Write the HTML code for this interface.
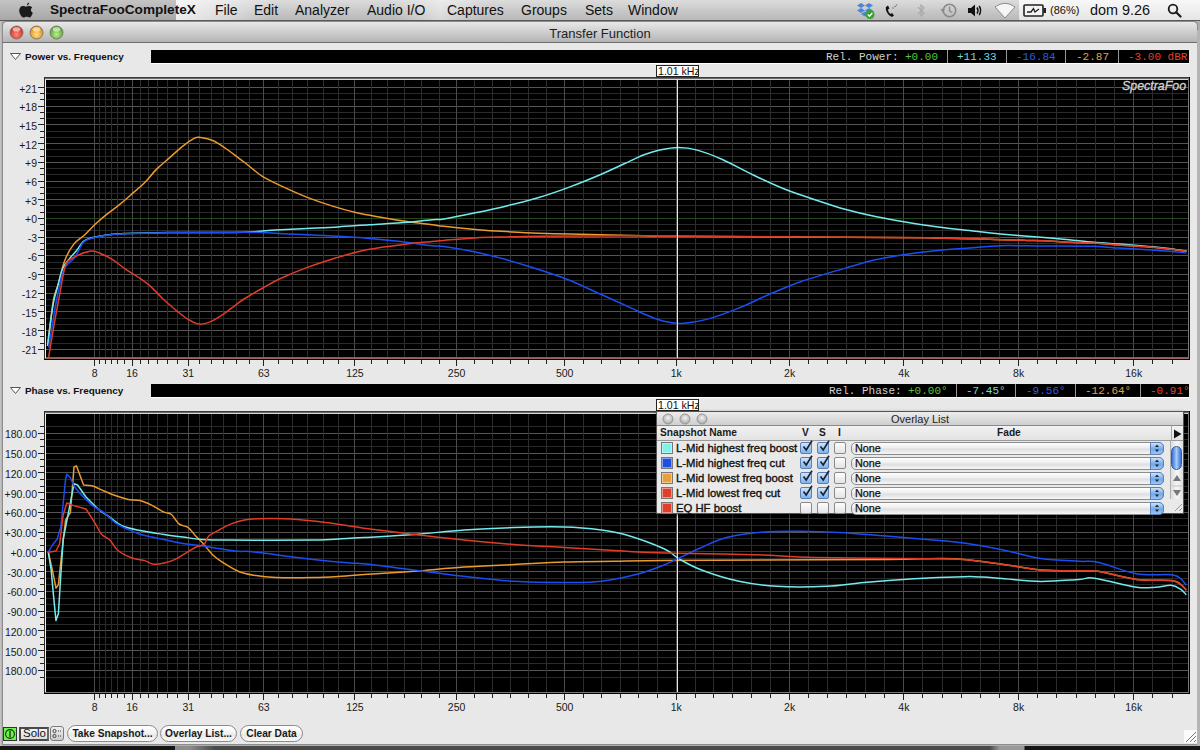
<!DOCTYPE html><html><head><meta charset="utf-8"><style>
*{margin:0;padding:0;box-sizing:border-box}
html,body{width:1200px;height:750px;overflow:hidden;background:#8e8e8e;font-family:"Liberation Sans",sans-serif}
.a{position:absolute}
.t{position:absolute;white-space:nowrap;line-height:1}
.yl{position:absolute;white-space:nowrap;line-height:1;font-size:10.5px;color:#1a1a1a;text-align:right;width:40px}
.xl{position:absolute;white-space:nowrap;line-height:1;font-size:10.5px;color:#1a1a1a;text-align:center;width:40px}
.mono{font-family:"Liberation Mono",monospace}
</style></head><body>
<div class="a" style="left:0;top:0;width:1200px;height:750px;background:#b0b0b0"></div>
<div class="a" style="left:0;top:21px;width:3px;height:725px;background:linear-gradient(90deg,#c8c8c8,#a4a4a4)"></div>
<div class="a" style="left:0;top:746px;width:1200px;height:4px;background:linear-gradient(90deg,#151515 0,#151515 175px,#8c8c8c 175px,#8c8c8c 190px,#4a4a4a 215px,#4c4c4c 990px,#9a9a9a 1000px,#9a9a9a 1024px,#151515 1025px,#151515 1200px)"></div>
<div class="a" style="left:0;top:0;width:1200px;height:21px;background:linear-gradient(#dcdcdc,#b8b8b8);border-bottom:1px solid #6e6e6e"></div>
<div class="a" style="left:2px;top:21px;width:1196px;height:724px;background:#e8e8e8;border-radius:5px 5px 0 0;border:1px solid #8c8c8c"></div>
<div class="a" style="left:2px;top:21px;width:1196px;height:22px;background:linear-gradient(#e8e8e8,#b4b4b4);border-radius:5px 5px 0 0;border:1px solid #8c8c8c;border-bottom:1px solid #6e6e6e"></div>
<div class="t" style="left:0;width:1200px;text-align:center;top:26.6px;font-size:13px;color:#1e1e1e">Transfer Function</div>
<svg class="a" style="left:10px;top:53px" width="11" height="7"><polygon points="0.5,0.5 10.5,0.5 5.5,6.5" fill="#fff" stroke="#555" stroke-width="1"/></svg>
<div class="t" style="left:25px;top:51.7px;font-size:9.9px;font-weight:bold;color:#111">Power vs. Frequency</div>
<svg class="a" style="left:10px;top:387px" width="11" height="7"><polygon points="0.5,0.5 10.5,0.5 5.5,6.5" fill="#fff" stroke="#555" stroke-width="1"/></svg>
<div class="t" style="left:25px;top:385.7px;font-size:9.9px;font-weight:bold;color:#111">Phase vs. Frequency</div>
<div class="a" style="left:151px;top:50px;width:1038px;height:14px;background:#000;border-bottom:1px solid #fff"></div>
<div class="a" style="left:151px;top:384px;width:1038px;height:14px;background:#000;border-bottom:1px solid #fff"></div>
<svg class="a" style="left:44px;top:77px" width="1146" height="283" viewBox="44 77 1146 283">
<g shape-rendering="crispEdges">
<rect x="44" y="77" width="1146" height="283" fill="#000"/>
<rect x="46" y="349" width="1142" height="1" fill="#555555"/>
<rect x="46" y="343" width="1142" height="1" fill="#2a2a2a"/>
<rect x="46" y="336" width="1142" height="1" fill="#2a2a2a"/>
<rect x="46" y="330" width="1142" height="1" fill="#555555"/>
<rect x="46" y="324" width="1142" height="1" fill="#2a2a2a"/>
<rect x="46" y="318" width="1142" height="1" fill="#2a2a2a"/>
<rect x="46" y="311" width="1142" height="1" fill="#555555"/>
<rect x="46" y="305" width="1142" height="1" fill="#2a2a2a"/>
<rect x="46" y="299" width="1142" height="1" fill="#2a2a2a"/>
<rect x="46" y="293" width="1142" height="1" fill="#555555"/>
<rect x="46" y="286" width="1142" height="1" fill="#2a2a2a"/>
<rect x="46" y="280" width="1142" height="1" fill="#2a2a2a"/>
<rect x="46" y="274" width="1142" height="1" fill="#555555"/>
<rect x="46" y="268" width="1142" height="1" fill="#2a2a2a"/>
<rect x="46" y="262" width="1142" height="1" fill="#2a2a2a"/>
<rect x="46" y="255" width="1142" height="1" fill="#555555"/>
<rect x="46" y="249" width="1142" height="1" fill="#2a2a2a"/>
<rect x="46" y="243" width="1142" height="1" fill="#2a2a2a"/>
<rect x="46" y="237" width="1142" height="1" fill="#555555"/>
<rect x="46" y="230" width="1142" height="1" fill="#2a2a2a"/>
<rect x="46" y="224" width="1142" height="1" fill="#2a2a2a"/>
<rect x="46" y="218" width="1142" height="1" fill="#555555"/>
<rect x="46" y="212" width="1142" height="1" fill="#2a2a2a"/>
<rect x="46" y="205" width="1142" height="1" fill="#2a2a2a"/>
<rect x="46" y="199" width="1142" height="1" fill="#555555"/>
<rect x="46" y="193" width="1142" height="1" fill="#2a2a2a"/>
<rect x="46" y="187" width="1142" height="1" fill="#2a2a2a"/>
<rect x="46" y="181" width="1142" height="1" fill="#555555"/>
<rect x="46" y="174" width="1142" height="1" fill="#2a2a2a"/>
<rect x="46" y="168" width="1142" height="1" fill="#2a2a2a"/>
<rect x="46" y="162" width="1142" height="1" fill="#555555"/>
<rect x="46" y="156" width="1142" height="1" fill="#2a2a2a"/>
<rect x="46" y="149" width="1142" height="1" fill="#2a2a2a"/>
<rect x="46" y="143" width="1142" height="1" fill="#555555"/>
<rect x="46" y="137" width="1142" height="1" fill="#2a2a2a"/>
<rect x="46" y="131" width="1142" height="1" fill="#2a2a2a"/>
<rect x="46" y="124" width="1142" height="1" fill="#555555"/>
<rect x="46" y="118" width="1142" height="1" fill="#2a2a2a"/>
<rect x="46" y="112" width="1142" height="1" fill="#2a2a2a"/>
<rect x="46" y="106" width="1142" height="1" fill="#555555"/>
<rect x="46" y="99" width="1142" height="1" fill="#2a2a2a"/>
<rect x="46" y="93" width="1142" height="1" fill="#2a2a2a"/>
<rect x="46" y="87" width="1142" height="1" fill="#555555"/>
<rect x="94" y="79" width="1" height="279" fill="#4a4a4a"/>
<rect x="99" y="79" width="1" height="279" fill="#2c2c2c"/>
<rect x="105" y="79" width="1" height="279" fill="#2c2c2c"/>
<rect x="111" y="79" width="1" height="279" fill="#2c2c2c"/>
<rect x="117" y="79" width="1" height="279" fill="#2c2c2c"/>
<rect x="124" y="79" width="1" height="279" fill="#2c2c2c"/>
<rect x="132" y="79" width="1" height="279" fill="#4a4a4a"/>
<rect x="140" y="79" width="1" height="279" fill="#2c2c2c"/>
<rect x="148" y="79" width="1" height="279" fill="#2c2c2c"/>
<rect x="157" y="79" width="1" height="279" fill="#2c2c2c"/>
<rect x="167" y="79" width="1" height="279" fill="#2c2c2c"/>
<rect x="177" y="79" width="1" height="279" fill="#2c2c2c"/>
<rect x="188" y="79" width="1" height="279" fill="#4a4a4a"/>
<rect x="199" y="79" width="1" height="279" fill="#2c2c2c"/>
<rect x="211" y="79" width="1" height="279" fill="#2c2c2c"/>
<rect x="223" y="79" width="1" height="279" fill="#2c2c2c"/>
<rect x="236" y="79" width="1" height="279" fill="#2c2c2c"/>
<rect x="249" y="79" width="1" height="279" fill="#2c2c2c"/>
<rect x="263" y="79" width="1" height="279" fill="#4a4a4a"/>
<rect x="278" y="79" width="1" height="279" fill="#2c2c2c"/>
<rect x="292" y="79" width="1" height="279" fill="#2c2c2c"/>
<rect x="307" y="79" width="1" height="279" fill="#2c2c2c"/>
<rect x="323" y="79" width="1" height="279" fill="#2c2c2c"/>
<rect x="338" y="79" width="1" height="279" fill="#2c2c2c"/>
<rect x="354" y="79" width="1" height="279" fill="#4a4a4a"/>
<rect x="371" y="79" width="1" height="279" fill="#2c2c2c"/>
<rect x="387" y="79" width="1" height="279" fill="#2c2c2c"/>
<rect x="404" y="79" width="1" height="279" fill="#2c2c2c"/>
<rect x="421" y="79" width="1" height="279" fill="#2c2c2c"/>
<rect x="439" y="79" width="1" height="279" fill="#2c2c2c"/>
<rect x="456" y="79" width="1" height="279" fill="#4a4a4a"/>
<rect x="474" y="79" width="1" height="279" fill="#2c2c2c"/>
<rect x="492" y="79" width="1" height="279" fill="#2c2c2c"/>
<rect x="510" y="79" width="1" height="279" fill="#2c2c2c"/>
<rect x="528" y="79" width="1" height="279" fill="#2c2c2c"/>
<rect x="546" y="79" width="1" height="279" fill="#2c2c2c"/>
<rect x="564" y="79" width="1" height="279" fill="#4a4a4a"/>
<rect x="583" y="79" width="1" height="279" fill="#2c2c2c"/>
<rect x="601" y="79" width="1" height="279" fill="#2c2c2c"/>
<rect x="620" y="79" width="1" height="279" fill="#2c2c2c"/>
<rect x="638" y="79" width="1" height="279" fill="#2c2c2c"/>
<rect x="657" y="79" width="1" height="279" fill="#2c2c2c"/>
<rect x="676" y="79" width="1" height="279" fill="#4a4a4a"/>
<rect x="695" y="79" width="1" height="279" fill="#2c2c2c"/>
<rect x="713" y="79" width="1" height="279" fill="#2c2c2c"/>
<rect x="732" y="79" width="1" height="279" fill="#2c2c2c"/>
<rect x="751" y="79" width="1" height="279" fill="#2c2c2c"/>
<rect x="770" y="79" width="1" height="279" fill="#2c2c2c"/>
<rect x="789" y="79" width="1" height="279" fill="#4a4a4a"/>
<rect x="808" y="79" width="1" height="279" fill="#2c2c2c"/>
<rect x="827" y="79" width="1" height="279" fill="#2c2c2c"/>
<rect x="846" y="79" width="1" height="279" fill="#2c2c2c"/>
<rect x="865" y="79" width="1" height="279" fill="#2c2c2c"/>
<rect x="884" y="79" width="1" height="279" fill="#2c2c2c"/>
<rect x="903" y="79" width="1" height="279" fill="#4a4a4a"/>
<rect x="922" y="79" width="1" height="279" fill="#2c2c2c"/>
<rect x="942" y="79" width="1" height="279" fill="#2c2c2c"/>
<rect x="961" y="79" width="1" height="279" fill="#2c2c2c"/>
<rect x="980" y="79" width="1" height="279" fill="#2c2c2c"/>
<rect x="999" y="79" width="1" height="279" fill="#2c2c2c"/>
<rect x="1018" y="79" width="1" height="279" fill="#4a4a4a"/>
<rect x="1037" y="79" width="1" height="279" fill="#2c2c2c"/>
<rect x="1056" y="79" width="1" height="279" fill="#2c2c2c"/>
<rect x="1076" y="79" width="1" height="279" fill="#2c2c2c"/>
<rect x="1095" y="79" width="1" height="279" fill="#2c2c2c"/>
<rect x="1114" y="79" width="1" height="279" fill="#2c2c2c"/>
<rect x="1133" y="79" width="1" height="279" fill="#4a4a4a"/>
<rect x="1152" y="79" width="1" height="279" fill="#2c2c2c"/>
<rect x="1172" y="79" width="1" height="279" fill="#2c2c2c"/>
<rect x="46" y="218" width="1142" height="1" fill="#25481a"/>
<rect x="44" y="77" width="1146" height="1" fill="#3a3a3a"/>
<rect x="44" y="78" width="1146" height="1" fill="#6a6a6a"/>
<rect x="44" y="77" width="1" height="283" fill="#2a2a2a"/>
<rect x="45" y="79" width="1" height="280" fill="#f0f0f0"/>
<rect x="45" y="79" width="1143" height="1" fill="#d8d8d8"/>
<rect x="45" y="358" width="1144" height="1" fill="#787878"/>
<rect x="1188" y="78" width="1" height="281" fill="#787878"/>
<rect x="44" y="359" width="1146" height="1" fill="#000"/>
<rect x="1189" y="77" width="1" height="283" fill="#000"/>
</g>
<path d="M47.8,344.4 C48.7,337.1 51.7,310.4 53.4,300.5 C55.1,290.6 56.3,291.4 58.1,284.9 C59.9,278.4 61.8,268.2 64.4,261.4 C67.0,254.6 70.4,248.5 73.8,244.1 C77.2,239.7 81.1,238.1 84.8,234.7 C88.5,231.3 92.0,227.1 95.7,223.7 C99.4,220.3 102.8,217.4 106.7,214.3 C110.6,211.2 115.0,208.3 119.2,204.9 C123.4,201.5 127.6,197.7 131.8,194.0 C136.0,190.3 140.1,187.2 144.3,183.0 C148.5,178.8 152.7,173.1 156.9,168.9 C161.1,164.7 165.2,161.6 169.4,157.9 C173.6,154.2 177.7,150.2 181.9,146.9 C186.1,143.6 191.4,139.8 194.5,138.2 C197.6,136.6 197.6,137.1 200.7,137.5 C203.8,137.9 209.1,138.9 213.3,140.7 C217.5,142.5 221.6,145.6 225.8,148.5 C230.0,151.4 235.4,155.7 238.4,157.9 C241.4,160.2 239.9,158.9 244.0,162.0 C248.1,165.1 256.5,172.7 262.8,176.7 C269.1,180.7 274.3,182.7 281.6,186.1 C288.9,189.5 298.3,193.8 306.7,197.1 C315.1,200.4 323.4,203.3 331.8,205.9 C340.2,208.5 348.5,210.9 356.9,212.8 C365.2,214.7 373.5,216.0 381.9,217.5 C390.2,219.0 398.6,220.4 407.0,221.6 C415.4,222.8 425.9,223.9 432.1,224.7 C438.3,225.5 436.8,225.5 444.0,226.3 C451.2,227.1 464.9,228.5 475.3,229.4 C485.8,230.3 496.2,231.0 506.7,231.6 C517.1,232.2 527.5,232.8 538.0,233.2 C548.5,233.6 558.9,233.8 569.4,234.1 C579.9,234.3 588.3,234.4 600.7,234.7 C613.1,235.0 631.5,235.4 644.0,235.7 C656.5,236.0 642.7,236.1 676.0,236.3 C709.3,236.6 800.9,236.9 844.0,237.2 C887.1,237.5 909.8,237.5 934.9,237.9 C960.0,238.3 979.4,239.0 994.5,239.4 C1009.6,239.8 1017.5,240.2 1025.8,240.4 C1034.0,240.6 1036.8,240.5 1044.0,240.8 C1051.2,241.1 1060.7,241.9 1069.0,242.3 C1077.3,242.7 1085.7,242.7 1094.0,243.1 C1102.3,243.5 1110.7,244.4 1119.0,245.0 C1127.3,245.6 1135.7,245.8 1144.0,246.5 C1152.3,247.2 1161.9,248.2 1169.0,249.0 C1176.1,249.8 1183.6,250.9 1186.5,251.3" fill="none" stroke="#ec9a30" stroke-width="1.5" stroke-linejoin="round"/>
<path d="M47.5,346.0 C48.4,339.2 51.2,315.2 53.0,305.0 C54.8,294.8 56.3,291.2 58.0,285.0 C59.7,278.8 61.0,272.5 63.0,268.0 C65.0,263.5 67.7,261.0 70.0,258.0 C72.3,255.0 74.8,252.7 77.0,250.0 C79.2,247.3 80.9,243.6 83.2,241.6 C85.5,239.6 87.1,239.1 91.0,238.0 C94.9,236.9 101.0,235.8 106.7,235.0 C112.5,234.2 115.0,233.9 125.5,233.5 C135.9,233.1 149.7,232.7 169.4,232.5 C189.2,232.3 226.3,232.6 244.0,232.2 C261.6,231.8 264.9,230.6 275.3,230.0 C285.8,229.4 296.2,228.9 306.7,228.4 C317.1,227.9 327.6,227.5 338.0,226.9 C348.4,226.3 358.9,225.4 369.4,224.7 C379.8,224.0 390.2,223.6 400.7,222.8 C411.1,222.0 424.9,220.3 432.1,219.7 C439.3,219.1 436.8,220.2 444.0,219.0 C451.2,217.8 464.9,215.0 475.3,212.8 C485.8,210.6 496.2,208.4 506.7,205.9 C517.1,203.4 527.5,200.8 538.0,197.7 C548.5,194.6 558.9,191.0 569.4,187.1 C579.9,183.2 590.2,179.0 600.7,174.5 C611.2,170.0 624.9,163.4 632.1,160.1 C639.3,156.8 639.4,156.5 644.0,154.8 C648.6,153.1 654.0,151.3 659.7,150.1 C665.5,148.9 672.2,147.6 678.5,147.6 C684.8,147.6 690.0,148.1 697.3,150.1 C704.6,152.1 713.0,155.3 722.4,159.5 C731.8,163.7 743.2,170.2 753.7,175.2 C764.2,180.2 774.7,185.1 785.1,189.3 C795.5,193.5 806.6,196.9 816.4,200.2 C826.2,203.5 834.2,206.3 844.0,209.0 C853.8,211.7 864.8,214.3 875.3,216.5 C885.8,218.7 896.2,220.5 906.7,222.2 C917.2,223.9 927.5,225.5 938.0,226.9 C948.5,228.3 958.9,229.4 969.4,230.6 C979.9,231.8 988.3,232.9 1000.7,234.1 C1013.1,235.2 1032.6,236.6 1044.0,237.5 C1055.4,238.4 1060.7,239.0 1069.0,239.8 C1077.3,240.6 1085.7,241.6 1094.0,242.3 C1102.3,243.0 1112.3,243.5 1119.0,244.0 C1125.7,244.5 1127.2,244.7 1134.0,245.3 C1140.8,245.9 1151.2,246.6 1160.0,247.5 C1168.8,248.4 1182.1,250.4 1186.5,251.0" fill="none" stroke="#74ecee" stroke-width="1.5" stroke-linejoin="round"/>
<path d="M48.7,347.6 C50.0,339.8 54.1,313.1 56.5,300.5 C58.9,287.9 61.0,278.3 62.8,272.3 C64.6,266.3 65.4,267.1 67.5,264.5 C69.6,261.9 72.7,260.3 75.3,256.7 C77.9,253.0 80.6,245.6 83.2,242.6 C85.8,239.6 87.1,239.7 91.0,238.5 C94.9,237.3 101.0,236.1 106.7,235.3 C112.5,234.5 115.0,234.2 125.5,233.8 C135.9,233.4 149.7,233.1 169.4,232.8 C189.2,232.5 226.3,232.1 244.0,232.2 C261.6,232.3 264.9,232.8 275.3,233.2 C285.8,233.6 296.2,234.2 306.7,234.7 C317.1,235.2 327.6,235.7 338.0,236.3 C348.4,236.9 358.9,237.6 369.4,238.5 C379.8,239.4 390.2,240.4 400.7,241.6 C411.1,242.8 424.9,244.9 432.1,245.7 C439.3,246.5 436.8,245.5 444.0,246.6 C451.2,247.7 464.9,249.8 475.3,252.0 C485.8,254.2 496.2,256.9 506.7,259.8 C517.1,262.7 527.5,265.8 538.0,269.2 C548.5,272.6 558.9,276.0 569.4,280.2 C579.9,284.4 590.2,289.6 600.7,294.3 C611.2,299.0 624.9,305.1 632.1,308.4 C639.3,311.7 638.9,311.9 644.0,314.0 C649.1,316.1 656.5,319.3 662.8,320.9 C669.1,322.5 674.3,323.6 681.6,323.4 C688.9,323.1 697.3,321.9 706.7,319.4 C716.1,316.9 727.5,312.6 738.0,308.4 C748.5,304.2 758.9,298.8 769.4,294.3 C779.9,289.9 788.3,286.0 800.7,281.7 C813.1,277.4 831.6,272.2 844.0,268.6 C856.4,265.0 864.8,262.2 875.3,259.8 C885.8,257.4 896.2,255.8 906.7,254.2 C917.2,252.6 927.5,251.4 938.0,250.4 C948.5,249.4 958.9,248.7 969.4,247.9 C979.9,247.1 988.3,246.0 1000.7,245.7 C1013.1,245.4 1028.5,245.9 1044.0,246.0 C1059.5,246.1 1081.5,246.0 1094.0,246.3 C1106.5,246.7 1110.7,247.6 1119.0,248.1 C1127.3,248.6 1135.7,248.9 1144.0,249.4 C1152.3,249.9 1161.9,250.7 1169.0,251.3 C1176.1,251.9 1183.6,252.7 1186.5,253.0" fill="none" stroke="#1a4ef0" stroke-width="1.5" stroke-linejoin="round"/>
<path d="M48.7,357.0 C49.5,352.3 51.6,339.2 53.4,328.8 C55.2,318.4 57.6,305.0 59.7,294.3 C61.8,283.6 63.3,270.8 65.9,264.5 C68.5,258.2 71.1,258.9 75.3,256.7 C79.5,254.4 86.8,251.5 91.0,251.0 C95.2,250.5 96.7,252.0 100.4,253.5 C104.1,255.0 108.8,257.2 113.0,259.8 C117.2,262.4 121.3,266.3 125.5,269.2 C129.7,272.1 133.8,274.1 138.0,277.0 C142.2,279.9 146.4,282.7 150.6,286.4 C154.8,290.1 158.9,295.1 163.1,299.0 C167.3,302.9 171.5,306.6 175.7,310.0 C179.9,313.4 184.3,317.0 188.2,319.4 C192.1,321.8 195.5,323.7 199.2,324.1 C202.8,324.5 206.2,323.5 210.1,321.9 C214.0,320.3 218.5,317.5 222.7,314.7 C226.9,311.9 231.6,307.9 235.2,305.3 C238.8,302.7 239.4,301.9 244.0,299.0 C248.6,296.1 256.5,291.5 262.8,288.0 C269.1,284.5 274.3,281.4 281.6,278.0 C288.9,274.6 298.3,270.7 306.7,267.6 C315.1,264.5 323.4,261.8 331.8,259.2 C340.2,256.6 348.5,254.0 356.9,252.0 C365.2,250.0 373.5,248.6 381.9,247.3 C390.2,246.0 398.6,245.1 407.0,244.1 C415.4,243.1 425.9,242.2 432.1,241.6 C438.3,241.0 436.8,241.0 444.0,240.4 C451.2,239.8 464.9,238.5 475.3,237.9 C485.8,237.3 496.2,237.2 506.7,236.9 C517.1,236.6 515.1,236.5 538.0,236.3 C560.9,236.1 621.0,235.7 644.0,235.7 C667.0,235.7 642.7,236.1 676.0,236.3 C709.3,236.6 800.9,236.9 844.0,237.2 C887.1,237.5 909.8,237.5 934.9,237.9 C960.0,238.3 979.4,239.0 994.5,239.4 C1009.6,239.8 1017.5,240.2 1025.8,240.4 C1034.0,240.6 1036.8,240.5 1044.0,240.8 C1051.2,241.1 1060.7,241.9 1069.0,242.3 C1077.3,242.7 1085.7,242.7 1094.0,243.1 C1102.3,243.5 1110.7,244.4 1119.0,245.0 C1127.3,245.6 1135.7,245.8 1144.0,246.5 C1152.3,247.2 1161.9,248.2 1169.0,249.0 C1176.1,249.8 1183.6,250.9 1186.5,251.3" fill="none" stroke="#e03c28" stroke-width="1.5" stroke-linejoin="round"/>
<rect x="46" y="357" width="1142" height="1.3" fill="#dc3c28"/>
<rect x="677" y="79" width="1" height="279" fill="#e6e6e6" shape-rendering="crispEdges"/>
</svg>
<svg class="a" style="left:44px;top:411px" width="1146" height="283" viewBox="44 411 1146 283">
<g shape-rendering="crispEdges">
<rect x="44" y="411" width="1146" height="283" fill="#000"/>
<rect x="46" y="677" width="1142" height="1" fill="#2a2a2a"/>
<rect x="46" y="670" width="1142" height="1" fill="#555555"/>
<rect x="46" y="663" width="1142" height="1" fill="#2a2a2a"/>
<rect x="46" y="657" width="1142" height="1" fill="#2a2a2a"/>
<rect x="46" y="650" width="1142" height="1" fill="#555555"/>
<rect x="46" y="644" width="1142" height="1" fill="#2a2a2a"/>
<rect x="46" y="637" width="1142" height="1" fill="#2a2a2a"/>
<rect x="46" y="630" width="1142" height="1" fill="#555555"/>
<rect x="46" y="624" width="1142" height="1" fill="#2a2a2a"/>
<rect x="46" y="617" width="1142" height="1" fill="#2a2a2a"/>
<rect x="46" y="611" width="1142" height="1" fill="#555555"/>
<rect x="46" y="604" width="1142" height="1" fill="#2a2a2a"/>
<rect x="46" y="598" width="1142" height="1" fill="#2a2a2a"/>
<rect x="46" y="591" width="1142" height="1" fill="#555555"/>
<rect x="46" y="584" width="1142" height="1" fill="#2a2a2a"/>
<rect x="46" y="578" width="1142" height="1" fill="#2a2a2a"/>
<rect x="46" y="571" width="1142" height="1" fill="#555555"/>
<rect x="46" y="565" width="1142" height="1" fill="#2a2a2a"/>
<rect x="46" y="558" width="1142" height="1" fill="#2a2a2a"/>
<rect x="46" y="551" width="1142" height="1" fill="#555555"/>
<rect x="46" y="545" width="1142" height="1" fill="#2a2a2a"/>
<rect x="46" y="538" width="1142" height="1" fill="#2a2a2a"/>
<rect x="46" y="532" width="1142" height="1" fill="#555555"/>
<rect x="46" y="525" width="1142" height="1" fill="#2a2a2a"/>
<rect x="46" y="518" width="1142" height="1" fill="#2a2a2a"/>
<rect x="46" y="512" width="1142" height="1" fill="#555555"/>
<rect x="46" y="505" width="1142" height="1" fill="#2a2a2a"/>
<rect x="46" y="499" width="1142" height="1" fill="#2a2a2a"/>
<rect x="46" y="492" width="1142" height="1" fill="#555555"/>
<rect x="46" y="486" width="1142" height="1" fill="#2a2a2a"/>
<rect x="46" y="479" width="1142" height="1" fill="#2a2a2a"/>
<rect x="46" y="472" width="1142" height="1" fill="#555555"/>
<rect x="46" y="466" width="1142" height="1" fill="#2a2a2a"/>
<rect x="46" y="459" width="1142" height="1" fill="#2a2a2a"/>
<rect x="46" y="453" width="1142" height="1" fill="#555555"/>
<rect x="46" y="446" width="1142" height="1" fill="#2a2a2a"/>
<rect x="46" y="439" width="1142" height="1" fill="#2a2a2a"/>
<rect x="46" y="433" width="1142" height="1" fill="#555555"/>
<rect x="46" y="426" width="1142" height="1" fill="#2a2a2a"/>
<rect x="94" y="413" width="1" height="279" fill="#4a4a4a"/>
<rect x="99" y="413" width="1" height="279" fill="#2c2c2c"/>
<rect x="105" y="413" width="1" height="279" fill="#2c2c2c"/>
<rect x="111" y="413" width="1" height="279" fill="#2c2c2c"/>
<rect x="117" y="413" width="1" height="279" fill="#2c2c2c"/>
<rect x="124" y="413" width="1" height="279" fill="#2c2c2c"/>
<rect x="132" y="413" width="1" height="279" fill="#4a4a4a"/>
<rect x="140" y="413" width="1" height="279" fill="#2c2c2c"/>
<rect x="148" y="413" width="1" height="279" fill="#2c2c2c"/>
<rect x="157" y="413" width="1" height="279" fill="#2c2c2c"/>
<rect x="167" y="413" width="1" height="279" fill="#2c2c2c"/>
<rect x="177" y="413" width="1" height="279" fill="#2c2c2c"/>
<rect x="188" y="413" width="1" height="279" fill="#4a4a4a"/>
<rect x="199" y="413" width="1" height="279" fill="#2c2c2c"/>
<rect x="211" y="413" width="1" height="279" fill="#2c2c2c"/>
<rect x="223" y="413" width="1" height="279" fill="#2c2c2c"/>
<rect x="236" y="413" width="1" height="279" fill="#2c2c2c"/>
<rect x="249" y="413" width="1" height="279" fill="#2c2c2c"/>
<rect x="263" y="413" width="1" height="279" fill="#4a4a4a"/>
<rect x="278" y="413" width="1" height="279" fill="#2c2c2c"/>
<rect x="292" y="413" width="1" height="279" fill="#2c2c2c"/>
<rect x="307" y="413" width="1" height="279" fill="#2c2c2c"/>
<rect x="323" y="413" width="1" height="279" fill="#2c2c2c"/>
<rect x="338" y="413" width="1" height="279" fill="#2c2c2c"/>
<rect x="354" y="413" width="1" height="279" fill="#4a4a4a"/>
<rect x="371" y="413" width="1" height="279" fill="#2c2c2c"/>
<rect x="387" y="413" width="1" height="279" fill="#2c2c2c"/>
<rect x="404" y="413" width="1" height="279" fill="#2c2c2c"/>
<rect x="421" y="413" width="1" height="279" fill="#2c2c2c"/>
<rect x="439" y="413" width="1" height="279" fill="#2c2c2c"/>
<rect x="456" y="413" width="1" height="279" fill="#4a4a4a"/>
<rect x="474" y="413" width="1" height="279" fill="#2c2c2c"/>
<rect x="492" y="413" width="1" height="279" fill="#2c2c2c"/>
<rect x="510" y="413" width="1" height="279" fill="#2c2c2c"/>
<rect x="528" y="413" width="1" height="279" fill="#2c2c2c"/>
<rect x="546" y="413" width="1" height="279" fill="#2c2c2c"/>
<rect x="564" y="413" width="1" height="279" fill="#4a4a4a"/>
<rect x="583" y="413" width="1" height="279" fill="#2c2c2c"/>
<rect x="601" y="413" width="1" height="279" fill="#2c2c2c"/>
<rect x="620" y="413" width="1" height="279" fill="#2c2c2c"/>
<rect x="638" y="413" width="1" height="279" fill="#2c2c2c"/>
<rect x="657" y="413" width="1" height="279" fill="#2c2c2c"/>
<rect x="676" y="413" width="1" height="279" fill="#4a4a4a"/>
<rect x="695" y="413" width="1" height="279" fill="#2c2c2c"/>
<rect x="713" y="413" width="1" height="279" fill="#2c2c2c"/>
<rect x="732" y="413" width="1" height="279" fill="#2c2c2c"/>
<rect x="751" y="413" width="1" height="279" fill="#2c2c2c"/>
<rect x="770" y="413" width="1" height="279" fill="#2c2c2c"/>
<rect x="789" y="413" width="1" height="279" fill="#4a4a4a"/>
<rect x="808" y="413" width="1" height="279" fill="#2c2c2c"/>
<rect x="827" y="413" width="1" height="279" fill="#2c2c2c"/>
<rect x="846" y="413" width="1" height="279" fill="#2c2c2c"/>
<rect x="865" y="413" width="1" height="279" fill="#2c2c2c"/>
<rect x="884" y="413" width="1" height="279" fill="#2c2c2c"/>
<rect x="903" y="413" width="1" height="279" fill="#4a4a4a"/>
<rect x="922" y="413" width="1" height="279" fill="#2c2c2c"/>
<rect x="942" y="413" width="1" height="279" fill="#2c2c2c"/>
<rect x="961" y="413" width="1" height="279" fill="#2c2c2c"/>
<rect x="980" y="413" width="1" height="279" fill="#2c2c2c"/>
<rect x="999" y="413" width="1" height="279" fill="#2c2c2c"/>
<rect x="1018" y="413" width="1" height="279" fill="#4a4a4a"/>
<rect x="1037" y="413" width="1" height="279" fill="#2c2c2c"/>
<rect x="1056" y="413" width="1" height="279" fill="#2c2c2c"/>
<rect x="1076" y="413" width="1" height="279" fill="#2c2c2c"/>
<rect x="1095" y="413" width="1" height="279" fill="#2c2c2c"/>
<rect x="1114" y="413" width="1" height="279" fill="#2c2c2c"/>
<rect x="1133" y="413" width="1" height="279" fill="#4a4a4a"/>
<rect x="1152" y="413" width="1" height="279" fill="#2c2c2c"/>
<rect x="1172" y="413" width="1" height="279" fill="#2c2c2c"/>
<rect x="46" y="551" width="1142" height="1" fill="#25481a"/>
<rect x="44" y="411" width="1146" height="1" fill="#3a3a3a"/>
<rect x="44" y="412" width="1146" height="1" fill="#6a6a6a"/>
<rect x="44" y="411" width="1" height="283" fill="#2a2a2a"/>
<rect x="45" y="413" width="1" height="280" fill="#f0f0f0"/>
<rect x="45" y="413" width="1143" height="1" fill="#d8d8d8"/>
<rect x="45" y="692" width="1144" height="1" fill="#787878"/>
<rect x="1188" y="412" width="1" height="281" fill="#787878"/>
<rect x="44" y="693" width="1146" height="1" fill="#000"/>
<rect x="1189" y="411" width="1" height="283" fill="#000"/>
</g>
<path d="M48.3,552.2 C48.3,552.2 52.4,570.2 52.4,570.2 C52.4,570.2 56.0,588.2 56.0,588.2 C56.0,588.2 58.4,584.6 58.4,584.6 C58.4,584.6 62.0,551.0 62.0,551.0 C62.0,551.0 65.6,519.8 65.6,519.8 C65.6,519.8 70.4,512.6 70.4,512.6 C70.4,512.6 74.0,467.0 74.0,467.0 C74.0,467.0 76.4,465.8 76.4,465.8 C76.4,465.8 83.6,485.0 83.6,485.0 C83.6,485.0 92.0,485.7 92.0,485.7 C95.4,486.7 100.0,489.3 104.0,491.0 C108.0,492.7 112.0,494.4 116.0,495.8 C120.0,497.2 124.0,498.6 128.0,499.4 C132.0,500.2 136.0,499.6 140.0,500.6 C144.0,501.6 148.0,503.5 152.0,505.4 C156.0,507.3 160.8,510.6 164.0,512.1 C167.2,513.6 169.0,512.5 171.5,514.5 C174.0,516.5 176.1,521.7 178.9,523.9 C181.7,526.1 185.5,525.6 188.3,527.6 C191.1,529.6 193.2,533.4 195.7,536.0 C198.2,538.6 200.4,540.4 203.2,543.5 C206.0,546.6 209.2,551.4 212.6,554.7 C216.0,558.0 219.5,560.3 223.8,563.1 C228.2,565.9 233.7,569.5 238.7,571.5 C243.7,573.5 247.4,574.2 253.6,575.2 C259.8,576.2 266.0,577.1 276.0,577.5 C286.0,577.9 302.5,577.7 313.4,577.5 C324.3,577.3 333.0,576.7 341.4,576.2 C349.8,575.7 351.9,575.3 364.0,574.5 C376.1,573.7 397.3,572.5 414.0,571.3 C430.7,570.0 447.3,568.1 464.0,567.0 C480.7,565.9 497.3,565.3 514.0,564.5 C530.7,563.7 547.3,562.5 564.0,562.0 C580.7,561.5 597.3,561.5 614.0,561.3 C630.7,561.0 639.0,560.7 664.0,560.5 C689.0,560.3 726.5,560.2 764.0,560.0 C801.5,559.8 859.8,559.8 889.0,559.5 C918.2,559.2 926.5,558.5 939.0,558.5 C951.5,558.5 953.5,558.4 964.0,559.4 C974.5,560.4 989.5,562.4 1002.3,564.2 C1015.1,566.0 1027.9,568.9 1040.7,570.0 C1053.5,571.1 1069.4,570.7 1079.0,570.9 C1088.6,571.1 1088.6,569.9 1098.2,571.3 C1107.8,572.7 1124.4,578.0 1136.5,579.5 C1148.6,581.0 1163.7,579.7 1171.0,580.5 C1178.3,581.3 1178.0,582.7 1180.6,584.3 C1183.1,585.9 1185.3,589.1 1186.3,590.1" fill="none" stroke="#ec9a30" stroke-width="1.5" stroke-linejoin="round"/>
<path d="M48.3,552.2 C48.3,552.2 51.2,570.2 51.2,570.2 C51.2,570.2 53.6,596.6 53.6,596.6 C53.6,596.6 56.0,620.6 56.0,620.6 C56.0,620.6 58.4,613.4 58.4,613.4 C58.4,613.4 60.8,575.0 60.8,575.0 C60.8,575.0 63.2,539.0 63.2,539.0 C63.2,539.0 68.0,515.0 68.0,515.0 C68.0,515.0 74.0,483.8 74.0,483.8 C74.0,483.8 77.6,485.0 77.6,485.0 C77.6,485.0 86.0,497.0 86.0,497.0 C86.0,497.0 98.0,509.0 98.0,509.0 C102.0,512.4 106.0,514.6 110.0,517.4 C114.0,520.2 117.0,523.6 122.0,525.8 C127.0,528.0 133.0,529.1 140.0,530.6 C147.0,532.1 156.9,533.4 164.0,534.5 C171.1,535.6 176.5,536.2 182.7,537.0 C188.9,537.8 193.8,538.9 201.3,539.4 C208.8,539.9 208.8,540.0 227.5,540.1 C246.2,540.2 294.4,540.3 313.4,540.1 C332.4,539.9 333.0,539.2 341.4,538.8 C349.8,538.4 351.9,538.2 364.0,537.5 C376.1,536.8 397.3,535.8 414.0,534.5 C430.7,533.2 447.3,531.2 464.0,530.0 C480.7,528.8 497.3,528.0 514.0,527.5 C530.7,527.0 549.4,526.6 564.0,527.0 C578.6,527.4 591.1,528.7 601.5,530.0 C611.9,531.3 616.1,531.9 626.5,535.0 C636.9,538.1 655.2,544.8 664.0,548.8 C672.8,552.8 672.8,555.3 679.0,558.8 C685.2,562.3 691.5,566.2 701.5,570.0 C711.5,573.8 726.5,578.6 739.0,581.3 C751.5,584.0 761.9,585.5 776.5,586.3 C791.1,587.1 811.9,586.9 826.5,586.3 C841.1,585.7 849.4,583.8 864.0,582.5 C878.6,581.2 897.3,579.8 914.0,578.8 C930.7,577.8 952.5,577.0 964.0,576.7 C975.5,576.4 976.8,576.8 983.2,577.1 C989.6,577.4 992.7,577.9 1002.3,578.6 C1011.9,579.3 1027.9,581.4 1040.7,581.5 C1053.5,581.6 1070.1,580.0 1079.0,579.5 C1087.9,579.0 1084.7,576.9 1094.3,578.2 C1103.9,579.5 1126.3,585.7 1136.5,587.2 C1146.7,588.7 1150.0,587.5 1155.7,587.2 C1161.5,586.9 1166.8,585.0 1171.0,585.3 C1175.2,585.6 1178.0,587.5 1180.6,589.1 C1183.1,590.7 1185.3,593.9 1186.3,594.9" fill="none" stroke="#74ecee" stroke-width="1.5" stroke-linejoin="round"/>
<path d="M48.3,552.2 C48.3,552.2 52.4,545.0 52.4,545.0 C52.4,545.0 57.2,539.0 57.2,539.0 C57.2,539.0 60.8,527.0 60.8,527.0 C60.8,527.0 63.2,503.0 63.2,503.0 C63.2,503.0 65.6,479.0 65.6,479.0 C65.6,479.0 66.8,474.2 66.8,474.2 C66.8,474.2 70.4,477.8 70.4,477.8 C70.4,477.8 74.0,486.2 74.0,486.2 C74.0,486.2 80.0,493.4 80.0,493.4 C80.0,493.4 92.0,505.4 92.0,505.4 C96.0,508.6 100.0,509.6 104.0,512.6 C108.0,515.6 112.0,520.6 116.0,523.4 C120.0,526.2 124.0,527.6 128.0,529.4 C132.0,531.2 136.0,532.9 140.0,534.2 C144.0,535.5 148.0,536.2 152.0,537.1 C156.0,538.0 158.9,538.3 164.0,539.4 C169.1,540.5 176.5,542.5 182.7,543.5 C188.9,544.5 195.1,544.8 201.3,545.7 C207.5,546.6 213.8,547.8 220.0,548.7 C226.2,549.6 233.7,550.8 238.7,551.3 C243.7,551.8 243.7,550.9 249.9,551.5 C256.1,552.1 265.4,553.4 276.0,554.7 C286.6,556.0 300.9,558.0 313.4,559.4 C325.8,560.8 342.3,562.4 350.7,563.1 C359.1,563.8 353.4,562.6 364.0,563.8 C374.6,564.9 397.3,567.9 414.0,570.0 C430.7,572.1 447.3,574.4 464.0,576.3 C480.7,578.2 497.3,580.3 514.0,581.3 C530.7,582.3 549.4,582.5 564.0,582.5 C578.6,582.5 589.0,582.8 601.5,581.3 C614.0,579.8 628.6,576.5 639.0,573.8 C649.4,571.1 657.3,567.6 664.0,565.0 C670.7,562.4 672.8,560.9 679.0,558.0 C685.2,555.1 693.6,550.9 701.5,547.5 C709.4,544.1 716.1,540.1 726.5,537.5 C736.9,534.9 751.5,533.0 764.0,532.0 C776.5,531.0 789.0,531.2 801.5,531.3 C814.0,531.4 824.4,531.7 839.0,532.5 C853.6,533.3 872.3,535.0 889.0,536.3 C905.7,537.6 926.5,539.4 939.0,540.5 C951.5,541.6 953.5,541.6 964.0,543.1 C974.5,544.6 989.5,547.2 1002.3,549.8 C1015.1,552.4 1027.9,556.6 1040.7,558.5 C1053.5,560.4 1069.4,560.7 1079.0,561.3 C1088.6,561.9 1088.6,560.2 1098.2,562.3 C1107.8,564.4 1124.4,571.7 1136.5,573.8 C1148.6,575.9 1163.7,574.0 1171.0,574.8 C1178.3,575.6 1178.0,576.9 1180.6,578.6 C1183.1,580.4 1185.3,584.2 1186.3,585.3" fill="none" stroke="#1a4ef0" stroke-width="1.5" stroke-linejoin="round"/>
<path d="M48.3,552.2 C48.3,552.2 56.0,551.0 56.0,551.0 C56.0,551.0 59.6,543.8 59.6,543.8 C59.6,543.8 63.2,515.0 63.2,515.0 C63.2,515.0 66.8,503.0 66.8,503.0 C66.8,503.0 72.8,505.4 72.8,505.4 C72.8,505.4 86.0,509.0 86.0,509.0 C86.0,509.0 94.4,522.2 94.4,522.2 C97.0,526.4 99.0,531.2 101.6,534.2 C104.2,537.2 107.2,537.4 110.0,540.2 C112.8,543.0 114.6,548.0 118.4,551.0 C122.2,554.0 128.4,556.6 132.8,558.2 C137.2,559.8 141.4,559.6 144.8,560.6 C148.2,561.6 150.0,563.8 153.2,564.2 C156.4,564.6 160.3,563.9 164.0,563.1 C167.7,562.3 171.5,561.1 175.2,559.4 C178.9,557.7 183.0,554.8 186.4,552.8 C189.8,550.8 192.8,548.6 195.7,547.2 C198.6,545.8 201.9,546.3 204.1,544.4 C206.3,542.5 206.2,538.5 208.8,536.0 C211.5,533.5 216.3,531.5 220.0,529.5 C223.7,527.5 227.1,525.5 231.2,523.9 C235.2,522.3 239.9,521.0 244.3,520.1 C248.7,519.2 250.9,519.0 257.4,518.8 C263.9,518.6 274.2,518.4 283.5,518.8 C292.8,519.2 303.8,520.1 313.4,521.1 C323.0,522.1 333.0,523.6 341.4,524.8 C349.8,526.0 351.9,526.6 364.0,528.2 C376.1,529.8 397.3,532.5 414.0,534.5 C430.7,536.5 447.3,538.3 464.0,540.0 C480.7,541.7 497.3,543.2 514.0,544.5 C530.7,545.8 547.3,546.5 564.0,547.5 C580.7,548.5 601.5,549.8 614.0,550.5 C626.5,551.2 628.6,551.5 639.0,552.0 C649.4,552.5 655.7,552.8 676.5,553.3 C697.3,553.8 741.1,554.3 764.0,555.0 C786.9,555.7 785.7,556.9 814.0,557.5 C842.3,558.1 909.0,558.5 934.0,558.8 C959.0,559.1 952.6,558.5 964.0,559.4 C975.4,560.3 989.5,562.4 1002.3,564.2 C1015.1,566.0 1027.9,568.9 1040.7,570.0 C1053.5,571.1 1069.4,570.7 1079.0,570.9 C1088.6,571.1 1088.6,569.9 1098.2,571.3 C1107.8,572.7 1124.4,578.0 1136.5,579.5 C1148.6,581.0 1163.7,579.7 1171.0,580.5 C1178.3,581.3 1178.0,582.7 1180.6,584.3 C1183.1,585.9 1185.3,589.1 1186.3,590.1" fill="none" stroke="#e03c28" stroke-width="1.5" stroke-linejoin="round"/>
<rect x="677" y="413" width="1" height="279" fill="#e6e6e6" shape-rendering="crispEdges"/>
</svg>
<div class="a" style="left:38px;top:349px;width:6px;height:1px;background:#222"></div>
<div class="yl" style="left:-3px;top:345.3px">-21</div>
<div class="a" style="left:40px;top:343px;width:4px;height:1px;background:#222"></div>
<div class="a" style="left:40px;top:336px;width:4px;height:1px;background:#222"></div>
<div class="a" style="left:38px;top:330px;width:6px;height:1px;background:#222"></div>
<div class="yl" style="left:-3px;top:326.6px">-18</div>
<div class="a" style="left:40px;top:324px;width:4px;height:1px;background:#222"></div>
<div class="a" style="left:40px;top:318px;width:4px;height:1px;background:#222"></div>
<div class="a" style="left:38px;top:311px;width:6px;height:1px;background:#222"></div>
<div class="yl" style="left:-3px;top:307.9px">-15</div>
<div class="a" style="left:40px;top:305px;width:4px;height:1px;background:#222"></div>
<div class="a" style="left:40px;top:299px;width:4px;height:1px;background:#222"></div>
<div class="a" style="left:38px;top:293px;width:6px;height:1px;background:#222"></div>
<div class="yl" style="left:-3px;top:289.2px">-12</div>
<div class="a" style="left:40px;top:286px;width:4px;height:1px;background:#222"></div>
<div class="a" style="left:40px;top:280px;width:4px;height:1px;background:#222"></div>
<div class="a" style="left:38px;top:274px;width:6px;height:1px;background:#222"></div>
<div class="yl" style="left:-3px;top:270.5px">-9</div>
<div class="a" style="left:40px;top:268px;width:4px;height:1px;background:#222"></div>
<div class="a" style="left:40px;top:262px;width:4px;height:1px;background:#222"></div>
<div class="a" style="left:38px;top:255px;width:6px;height:1px;background:#222"></div>
<div class="yl" style="left:-3px;top:251.8px">-6</div>
<div class="a" style="left:40px;top:249px;width:4px;height:1px;background:#222"></div>
<div class="a" style="left:40px;top:243px;width:4px;height:1px;background:#222"></div>
<div class="a" style="left:38px;top:237px;width:6px;height:1px;background:#222"></div>
<div class="yl" style="left:-3px;top:233.1px">-3</div>
<div class="a" style="left:40px;top:230px;width:4px;height:1px;background:#222"></div>
<div class="a" style="left:40px;top:224px;width:4px;height:1px;background:#222"></div>
<div class="a" style="left:38px;top:218px;width:6px;height:1px;background:#222"></div>
<div class="yl" style="left:-3px;top:214.4px">+0</div>
<div class="a" style="left:40px;top:212px;width:4px;height:1px;background:#222"></div>
<div class="a" style="left:40px;top:205px;width:4px;height:1px;background:#222"></div>
<div class="a" style="left:38px;top:199px;width:6px;height:1px;background:#222"></div>
<div class="yl" style="left:-3px;top:195.7px">+3</div>
<div class="a" style="left:40px;top:193px;width:4px;height:1px;background:#222"></div>
<div class="a" style="left:40px;top:187px;width:4px;height:1px;background:#222"></div>
<div class="a" style="left:38px;top:181px;width:6px;height:1px;background:#222"></div>
<div class="yl" style="left:-3px;top:177.0px">+6</div>
<div class="a" style="left:40px;top:174px;width:4px;height:1px;background:#222"></div>
<div class="a" style="left:40px;top:168px;width:4px;height:1px;background:#222"></div>
<div class="a" style="left:38px;top:162px;width:6px;height:1px;background:#222"></div>
<div class="yl" style="left:-3px;top:158.3px">+9</div>
<div class="a" style="left:40px;top:156px;width:4px;height:1px;background:#222"></div>
<div class="a" style="left:40px;top:149px;width:4px;height:1px;background:#222"></div>
<div class="a" style="left:38px;top:143px;width:6px;height:1px;background:#222"></div>
<div class="yl" style="left:-3px;top:139.6px">+12</div>
<div class="a" style="left:40px;top:137px;width:4px;height:1px;background:#222"></div>
<div class="a" style="left:40px;top:131px;width:4px;height:1px;background:#222"></div>
<div class="a" style="left:38px;top:124px;width:6px;height:1px;background:#222"></div>
<div class="yl" style="left:-3px;top:120.9px">+15</div>
<div class="a" style="left:40px;top:118px;width:4px;height:1px;background:#222"></div>
<div class="a" style="left:40px;top:112px;width:4px;height:1px;background:#222"></div>
<div class="a" style="left:38px;top:106px;width:6px;height:1px;background:#222"></div>
<div class="yl" style="left:-3px;top:102.2px">+18</div>
<div class="a" style="left:40px;top:99px;width:4px;height:1px;background:#222"></div>
<div class="a" style="left:40px;top:93px;width:4px;height:1px;background:#222"></div>
<div class="a" style="left:38px;top:87px;width:6px;height:1px;background:#222"></div>
<div class="yl" style="left:-3px;top:83.5px">+21</div>
<div class="a" style="left:40px;top:677px;width:4px;height:1px;background:#222"></div>
<div class="a" style="left:38px;top:670px;width:6px;height:1px;background:#222"></div>
<div class="yl" style="left:-3px;top:666.4px">180.00</div>
<div class="a" style="left:40px;top:663px;width:4px;height:1px;background:#222"></div>
<div class="a" style="left:40px;top:657px;width:4px;height:1px;background:#222"></div>
<div class="a" style="left:38px;top:650px;width:6px;height:1px;background:#222"></div>
<div class="yl" style="left:-3px;top:646.7px">150.00</div>
<div class="a" style="left:40px;top:644px;width:4px;height:1px;background:#222"></div>
<div class="a" style="left:40px;top:637px;width:4px;height:1px;background:#222"></div>
<div class="a" style="left:38px;top:630px;width:6px;height:1px;background:#222"></div>
<div class="yl" style="left:-3px;top:626.9px">120.00</div>
<div class="a" style="left:40px;top:624px;width:4px;height:1px;background:#222"></div>
<div class="a" style="left:40px;top:617px;width:4px;height:1px;background:#222"></div>
<div class="a" style="left:38px;top:611px;width:6px;height:1px;background:#222"></div>
<div class="yl" style="left:-3px;top:607.2px">-90.00</div>
<div class="a" style="left:40px;top:604px;width:4px;height:1px;background:#222"></div>
<div class="a" style="left:40px;top:598px;width:4px;height:1px;background:#222"></div>
<div class="a" style="left:38px;top:591px;width:6px;height:1px;background:#222"></div>
<div class="yl" style="left:-3px;top:587.4px">-60.00</div>
<div class="a" style="left:40px;top:584px;width:4px;height:1px;background:#222"></div>
<div class="a" style="left:40px;top:578px;width:4px;height:1px;background:#222"></div>
<div class="a" style="left:38px;top:571px;width:6px;height:1px;background:#222"></div>
<div class="yl" style="left:-3px;top:567.7px">-30.00</div>
<div class="a" style="left:40px;top:565px;width:4px;height:1px;background:#222"></div>
<div class="a" style="left:40px;top:558px;width:4px;height:1px;background:#222"></div>
<div class="a" style="left:38px;top:551px;width:6px;height:1px;background:#222"></div>
<div class="yl" style="left:-3px;top:547.9px">+0.00</div>
<div class="a" style="left:40px;top:545px;width:4px;height:1px;background:#222"></div>
<div class="a" style="left:40px;top:538px;width:4px;height:1px;background:#222"></div>
<div class="a" style="left:38px;top:532px;width:6px;height:1px;background:#222"></div>
<div class="yl" style="left:-3px;top:528.1px">+30.00</div>
<div class="a" style="left:40px;top:525px;width:4px;height:1px;background:#222"></div>
<div class="a" style="left:40px;top:518px;width:4px;height:1px;background:#222"></div>
<div class="a" style="left:38px;top:512px;width:6px;height:1px;background:#222"></div>
<div class="yl" style="left:-3px;top:508.4px">+60.00</div>
<div class="a" style="left:40px;top:505px;width:4px;height:1px;background:#222"></div>
<div class="a" style="left:40px;top:499px;width:4px;height:1px;background:#222"></div>
<div class="a" style="left:38px;top:492px;width:6px;height:1px;background:#222"></div>
<div class="yl" style="left:-3px;top:488.6px">+90.00</div>
<div class="a" style="left:40px;top:486px;width:4px;height:1px;background:#222"></div>
<div class="a" style="left:40px;top:479px;width:4px;height:1px;background:#222"></div>
<div class="a" style="left:38px;top:472px;width:6px;height:1px;background:#222"></div>
<div class="yl" style="left:-3px;top:468.9px">120.00</div>
<div class="a" style="left:40px;top:466px;width:4px;height:1px;background:#222"></div>
<div class="a" style="left:40px;top:459px;width:4px;height:1px;background:#222"></div>
<div class="a" style="left:38px;top:453px;width:6px;height:1px;background:#222"></div>
<div class="yl" style="left:-3px;top:449.1px">150.00</div>
<div class="a" style="left:40px;top:446px;width:4px;height:1px;background:#222"></div>
<div class="a" style="left:40px;top:439px;width:4px;height:1px;background:#222"></div>
<div class="a" style="left:38px;top:433px;width:6px;height:1px;background:#222"></div>
<div class="yl" style="left:-3px;top:429.4px">180.00</div>
<div class="a" style="left:40px;top:426px;width:4px;height:1px;background:#222"></div>
<div class="a" style="left:94px;top:360px;width:1px;height:6px;background:#222"></div>
<div class="xl" style="left:74.6px;top:367.8px">8</div>
<div class="a" style="left:99px;top:360px;width:1px;height:4px;background:#222"></div>
<div class="a" style="left:105px;top:360px;width:1px;height:4px;background:#222"></div>
<div class="a" style="left:111px;top:360px;width:1px;height:4px;background:#222"></div>
<div class="a" style="left:117px;top:360px;width:1px;height:4px;background:#222"></div>
<div class="a" style="left:124px;top:360px;width:1px;height:4px;background:#222"></div>
<div class="a" style="left:132px;top:360px;width:1px;height:6px;background:#222"></div>
<div class="xl" style="left:112.0px;top:367.8px">16</div>
<div class="a" style="left:140px;top:360px;width:1px;height:4px;background:#222"></div>
<div class="a" style="left:148px;top:360px;width:1px;height:4px;background:#222"></div>
<div class="a" style="left:157px;top:360px;width:1px;height:4px;background:#222"></div>
<div class="a" style="left:167px;top:360px;width:1px;height:4px;background:#222"></div>
<div class="a" style="left:177px;top:360px;width:1px;height:4px;background:#222"></div>
<div class="a" style="left:188px;top:360px;width:1px;height:6px;background:#222"></div>
<div class="xl" style="left:168.3px;top:367.8px">31</div>
<div class="a" style="left:199px;top:360px;width:1px;height:4px;background:#222"></div>
<div class="a" style="left:211px;top:360px;width:1px;height:4px;background:#222"></div>
<div class="a" style="left:223px;top:360px;width:1px;height:4px;background:#222"></div>
<div class="a" style="left:236px;top:360px;width:1px;height:4px;background:#222"></div>
<div class="a" style="left:249px;top:360px;width:1px;height:4px;background:#222"></div>
<div class="a" style="left:263px;top:360px;width:1px;height:6px;background:#222"></div>
<div class="xl" style="left:243.8px;top:367.8px">63</div>
<div class="a" style="left:278px;top:360px;width:1px;height:4px;background:#222"></div>
<div class="a" style="left:292px;top:360px;width:1px;height:4px;background:#222"></div>
<div class="a" style="left:307px;top:360px;width:1px;height:4px;background:#222"></div>
<div class="a" style="left:323px;top:360px;width:1px;height:4px;background:#222"></div>
<div class="a" style="left:338px;top:360px;width:1px;height:4px;background:#222"></div>
<div class="a" style="left:354px;top:360px;width:1px;height:6px;background:#222"></div>
<div class="xl" style="left:334.9px;top:367.8px">125</div>
<div class="a" style="left:371px;top:360px;width:1px;height:4px;background:#222"></div>
<div class="a" style="left:387px;top:360px;width:1px;height:4px;background:#222"></div>
<div class="a" style="left:404px;top:360px;width:1px;height:4px;background:#222"></div>
<div class="a" style="left:421px;top:360px;width:1px;height:4px;background:#222"></div>
<div class="a" style="left:439px;top:360px;width:1px;height:4px;background:#222"></div>
<div class="a" style="left:456px;top:360px;width:1px;height:6px;background:#222"></div>
<div class="xl" style="left:436.6px;top:367.8px">250</div>
<div class="a" style="left:474px;top:360px;width:1px;height:4px;background:#222"></div>
<div class="a" style="left:492px;top:360px;width:1px;height:4px;background:#222"></div>
<div class="a" style="left:510px;top:360px;width:1px;height:4px;background:#222"></div>
<div class="a" style="left:528px;top:360px;width:1px;height:4px;background:#222"></div>
<div class="a" style="left:546px;top:360px;width:1px;height:4px;background:#222"></div>
<div class="a" style="left:564px;top:360px;width:1px;height:6px;background:#222"></div>
<div class="xl" style="left:544.7px;top:367.8px">500</div>
<div class="a" style="left:583px;top:360px;width:1px;height:4px;background:#222"></div>
<div class="a" style="left:601px;top:360px;width:1px;height:4px;background:#222"></div>
<div class="a" style="left:620px;top:360px;width:1px;height:4px;background:#222"></div>
<div class="a" style="left:638px;top:360px;width:1px;height:4px;background:#222"></div>
<div class="a" style="left:657px;top:360px;width:1px;height:4px;background:#222"></div>
<div class="a" style="left:676px;top:360px;width:1px;height:6px;background:#222"></div>
<div class="xl" style="left:656.2px;top:367.8px">1k</div>
<div class="a" style="left:695px;top:360px;width:1px;height:4px;background:#222"></div>
<div class="a" style="left:713px;top:360px;width:1px;height:4px;background:#222"></div>
<div class="a" style="left:732px;top:360px;width:1px;height:4px;background:#222"></div>
<div class="a" style="left:751px;top:360px;width:1px;height:4px;background:#222"></div>
<div class="a" style="left:770px;top:360px;width:1px;height:4px;background:#222"></div>
<div class="a" style="left:789px;top:360px;width:1px;height:6px;background:#222"></div>
<div class="xl" style="left:769.6px;top:367.8px">2k</div>
<div class="a" style="left:808px;top:360px;width:1px;height:4px;background:#222"></div>
<div class="a" style="left:827px;top:360px;width:1px;height:4px;background:#222"></div>
<div class="a" style="left:846px;top:360px;width:1px;height:4px;background:#222"></div>
<div class="a" style="left:865px;top:360px;width:1px;height:4px;background:#222"></div>
<div class="a" style="left:884px;top:360px;width:1px;height:4px;background:#222"></div>
<div class="a" style="left:903px;top:360px;width:1px;height:6px;background:#222"></div>
<div class="xl" style="left:883.9px;top:367.8px">4k</div>
<div class="a" style="left:922px;top:360px;width:1px;height:4px;background:#222"></div>
<div class="a" style="left:942px;top:360px;width:1px;height:4px;background:#222"></div>
<div class="a" style="left:961px;top:360px;width:1px;height:4px;background:#222"></div>
<div class="a" style="left:980px;top:360px;width:1px;height:4px;background:#222"></div>
<div class="a" style="left:999px;top:360px;width:1px;height:4px;background:#222"></div>
<div class="a" style="left:1018px;top:360px;width:1px;height:6px;background:#222"></div>
<div class="xl" style="left:998.6px;top:367.8px">8k</div>
<div class="a" style="left:1037px;top:360px;width:1px;height:4px;background:#222"></div>
<div class="a" style="left:1056px;top:360px;width:1px;height:4px;background:#222"></div>
<div class="a" style="left:1076px;top:360px;width:1px;height:4px;background:#222"></div>
<div class="a" style="left:1095px;top:360px;width:1px;height:4px;background:#222"></div>
<div class="a" style="left:1114px;top:360px;width:1px;height:4px;background:#222"></div>
<div class="a" style="left:1133px;top:360px;width:1px;height:6px;background:#222"></div>
<div class="xl" style="left:1113.7px;top:367.8px">16k</div>
<div class="a" style="left:1152px;top:360px;width:1px;height:4px;background:#222"></div>
<div class="a" style="left:1172px;top:360px;width:1px;height:4px;background:#222"></div>
<div class="a" style="left:94px;top:694px;width:1px;height:6px;background:#222"></div>
<div class="xl" style="left:74.6px;top:701.8px">8</div>
<div class="a" style="left:99px;top:694px;width:1px;height:4px;background:#222"></div>
<div class="a" style="left:105px;top:694px;width:1px;height:4px;background:#222"></div>
<div class="a" style="left:111px;top:694px;width:1px;height:4px;background:#222"></div>
<div class="a" style="left:117px;top:694px;width:1px;height:4px;background:#222"></div>
<div class="a" style="left:124px;top:694px;width:1px;height:4px;background:#222"></div>
<div class="a" style="left:132px;top:694px;width:1px;height:6px;background:#222"></div>
<div class="xl" style="left:112.0px;top:701.8px">16</div>
<div class="a" style="left:140px;top:694px;width:1px;height:4px;background:#222"></div>
<div class="a" style="left:148px;top:694px;width:1px;height:4px;background:#222"></div>
<div class="a" style="left:157px;top:694px;width:1px;height:4px;background:#222"></div>
<div class="a" style="left:167px;top:694px;width:1px;height:4px;background:#222"></div>
<div class="a" style="left:177px;top:694px;width:1px;height:4px;background:#222"></div>
<div class="a" style="left:188px;top:694px;width:1px;height:6px;background:#222"></div>
<div class="xl" style="left:168.3px;top:701.8px">31</div>
<div class="a" style="left:199px;top:694px;width:1px;height:4px;background:#222"></div>
<div class="a" style="left:211px;top:694px;width:1px;height:4px;background:#222"></div>
<div class="a" style="left:223px;top:694px;width:1px;height:4px;background:#222"></div>
<div class="a" style="left:236px;top:694px;width:1px;height:4px;background:#222"></div>
<div class="a" style="left:249px;top:694px;width:1px;height:4px;background:#222"></div>
<div class="a" style="left:263px;top:694px;width:1px;height:6px;background:#222"></div>
<div class="xl" style="left:243.8px;top:701.8px">63</div>
<div class="a" style="left:278px;top:694px;width:1px;height:4px;background:#222"></div>
<div class="a" style="left:292px;top:694px;width:1px;height:4px;background:#222"></div>
<div class="a" style="left:307px;top:694px;width:1px;height:4px;background:#222"></div>
<div class="a" style="left:323px;top:694px;width:1px;height:4px;background:#222"></div>
<div class="a" style="left:338px;top:694px;width:1px;height:4px;background:#222"></div>
<div class="a" style="left:354px;top:694px;width:1px;height:6px;background:#222"></div>
<div class="xl" style="left:334.9px;top:701.8px">125</div>
<div class="a" style="left:371px;top:694px;width:1px;height:4px;background:#222"></div>
<div class="a" style="left:387px;top:694px;width:1px;height:4px;background:#222"></div>
<div class="a" style="left:404px;top:694px;width:1px;height:4px;background:#222"></div>
<div class="a" style="left:421px;top:694px;width:1px;height:4px;background:#222"></div>
<div class="a" style="left:439px;top:694px;width:1px;height:4px;background:#222"></div>
<div class="a" style="left:456px;top:694px;width:1px;height:6px;background:#222"></div>
<div class="xl" style="left:436.6px;top:701.8px">250</div>
<div class="a" style="left:474px;top:694px;width:1px;height:4px;background:#222"></div>
<div class="a" style="left:492px;top:694px;width:1px;height:4px;background:#222"></div>
<div class="a" style="left:510px;top:694px;width:1px;height:4px;background:#222"></div>
<div class="a" style="left:528px;top:694px;width:1px;height:4px;background:#222"></div>
<div class="a" style="left:546px;top:694px;width:1px;height:4px;background:#222"></div>
<div class="a" style="left:564px;top:694px;width:1px;height:6px;background:#222"></div>
<div class="xl" style="left:544.7px;top:701.8px">500</div>
<div class="a" style="left:583px;top:694px;width:1px;height:4px;background:#222"></div>
<div class="a" style="left:601px;top:694px;width:1px;height:4px;background:#222"></div>
<div class="a" style="left:620px;top:694px;width:1px;height:4px;background:#222"></div>
<div class="a" style="left:638px;top:694px;width:1px;height:4px;background:#222"></div>
<div class="a" style="left:657px;top:694px;width:1px;height:4px;background:#222"></div>
<div class="a" style="left:676px;top:694px;width:1px;height:6px;background:#222"></div>
<div class="xl" style="left:656.2px;top:701.8px">1k</div>
<div class="a" style="left:695px;top:694px;width:1px;height:4px;background:#222"></div>
<div class="a" style="left:713px;top:694px;width:1px;height:4px;background:#222"></div>
<div class="a" style="left:732px;top:694px;width:1px;height:4px;background:#222"></div>
<div class="a" style="left:751px;top:694px;width:1px;height:4px;background:#222"></div>
<div class="a" style="left:770px;top:694px;width:1px;height:4px;background:#222"></div>
<div class="a" style="left:789px;top:694px;width:1px;height:6px;background:#222"></div>
<div class="xl" style="left:769.6px;top:701.8px">2k</div>
<div class="a" style="left:808px;top:694px;width:1px;height:4px;background:#222"></div>
<div class="a" style="left:827px;top:694px;width:1px;height:4px;background:#222"></div>
<div class="a" style="left:846px;top:694px;width:1px;height:4px;background:#222"></div>
<div class="a" style="left:865px;top:694px;width:1px;height:4px;background:#222"></div>
<div class="a" style="left:884px;top:694px;width:1px;height:4px;background:#222"></div>
<div class="a" style="left:903px;top:694px;width:1px;height:6px;background:#222"></div>
<div class="xl" style="left:883.9px;top:701.8px">4k</div>
<div class="a" style="left:922px;top:694px;width:1px;height:4px;background:#222"></div>
<div class="a" style="left:942px;top:694px;width:1px;height:4px;background:#222"></div>
<div class="a" style="left:961px;top:694px;width:1px;height:4px;background:#222"></div>
<div class="a" style="left:980px;top:694px;width:1px;height:4px;background:#222"></div>
<div class="a" style="left:999px;top:694px;width:1px;height:4px;background:#222"></div>
<div class="a" style="left:1018px;top:694px;width:1px;height:6px;background:#222"></div>
<div class="xl" style="left:998.6px;top:701.8px">8k</div>
<div class="a" style="left:1037px;top:694px;width:1px;height:4px;background:#222"></div>
<div class="a" style="left:1056px;top:694px;width:1px;height:4px;background:#222"></div>
<div class="a" style="left:1076px;top:694px;width:1px;height:4px;background:#222"></div>
<div class="a" style="left:1095px;top:694px;width:1px;height:4px;background:#222"></div>
<div class="a" style="left:1114px;top:694px;width:1px;height:4px;background:#222"></div>
<div class="a" style="left:1133px;top:694px;width:1px;height:6px;background:#222"></div>
<div class="xl" style="left:1113.7px;top:701.8px">16k</div>
<div class="a" style="left:1152px;top:694px;width:1px;height:4px;background:#222"></div>
<div class="a" style="left:1172px;top:694px;width:1px;height:4px;background:#222"></div>
<div class="a" style="left:0;top:0;width:176px;height:21px;background:linear-gradient(#c4c4c4,#a6a6a6)"></div>
<div class="a" style="left:176px;top:0;width:100px;height:21px;background:linear-gradient(90deg,rgba(255,255,255,.75),rgba(255,255,255,.35) 60%,rgba(255,255,255,0))"></div>
<div class="a" style="left:395px;top:0;width:90px;height:21px;background:linear-gradient(90deg,rgba(255,255,255,0),rgba(255,255,255,.45),rgba(255,255,255,0))"></div>
<div class="a" style="left:1019px;top:0;width:181px;height:21px;background:linear-gradient(#f8f8f8,#e4e4e4)"></div>
<div class="a" style="left:0;top:20px;width:1200px;height:1px;background:#5a5a5a"></div>
<svg class="a" style="left:18px;top:2px" width="16" height="17" viewBox="0 0 16 17"><path d="M11.2,0.5 C11.3,1.8 10.4,3.2 9,3.5 C8.8,2.2 9.8,0.8 11.2,0.5 Z M8,4.6 C9,4.6 10,3.9 11.4,3.9 C12.3,3.9 13.6,4.4 14.3,5.6 C12.3,6.8 12.6,9.8 14.8,10.7 C14.3,12.4 13,15.4 11.5,15.5 C10.4,15.6 10,14.8 8.6,14.8 C7.2,14.8 6.8,15.5 5.6,15.6 C3.9,15.6 1.2,12.2 1.2,8.6 C1.2,5.9 2.9,4.1 4.9,4.1 C6.2,4.1 7.1,4.6 8,4.6 Z" fill="#1a1a1a"/></svg>
<div class="t" style="left:50px;top:3px;font-size:13.6px;font-weight:bold;color:#111">SpectraFooCompleteX</div>
<div class="t" style="left:215px;top:3px;font-size:14px;color:#111">File</div>
<div class="t" style="left:254px;top:3px;font-size:14px;color:#111">Edit</div>
<div class="t" style="left:295px;top:3px;font-size:14px;color:#111">Analyzer</div>
<div class="t" style="left:367px;top:3px;font-size:14px;color:#111">Audio I/O</div>
<div class="t" style="left:447px;top:3px;font-size:14px;color:#111">Captures</div>
<div class="t" style="left:521px;top:3px;font-size:14px;color:#111">Groups</div>
<div class="t" style="left:585px;top:3px;font-size:14px;color:#111">Sets</div>
<div class="t" style="left:628px;top:3px;font-size:14px;color:#111">Window</div>
<div class="t" style="left:1050px;top:5px;font-size:11px;color:#111">(86%)</div>
<div class="t" style="left:1090px;top:3px;font-size:14.4px;color:#111">dom 9.26</div>
<svg class="a" style="left:1167px;top:3px" width="15" height="15"><circle cx="6" cy="6" r="4.3" fill="none" stroke="#1a1a1a" stroke-width="1.8"/><line x1="9.2" y1="9.2" x2="13.5" y2="13.5" stroke="#1a1a1a" stroke-width="2.2" stroke-linecap="round"/></svg>
<svg class="a" style="left:857px;top:2px" width="19" height="18"><g fill="#4a86d8"><polygon points="4,1 8,3.5 4,6 0,3.5"/><polygon points="12,1 16,3.5 12,6 8,3.5"/><polygon points="4,6 8,8.5 4,11 0,8.5"/><polygon points="12,6 16,8.5 12,11 8,8.5"/><polygon points="8,9.5 12,12 8,14.5 4,12"/></g><circle cx="13" cy="12.5" r="4.5" fill="#3aa030"/><path d="M10.8,12.5 L12.5,14.2 L15.3,11" stroke="#fff" stroke-width="1.4" fill="none"/></svg>
<svg class="a" style="left:884px;top:3px" width="14" height="16"><path d="M2,4 C1,6 3,12 8,14 L10,12.5 L8,10 L6.5,11 C5,10 4,8 4,6.5 L5.5,5.5 L4,2.5 Z" fill="#111"/><g fill="#777"><circle cx="9" cy="5" r=".8"/><circle cx="11" cy="3.5" r=".8"/><circle cx="12.5" cy="2" r=".8"/></g></svg>
<svg class="a" style="left:916px;top:3px" width="10" height="15"><path d="M2,4 L8,10 L5,13 L5,2 L8,5 L2,11" fill="none" stroke="#a8a8a8" stroke-width="1.1"/></svg>
<svg class="a" style="left:940px;top:2px" width="18" height="17"><circle cx="9.5" cy="8.5" r="6.2" fill="none" stroke="#8a8a8a" stroke-width="1.6"/><path d="M9.5,4.5 L9.5,8.8 L12.3,10.5" fill="none" stroke="#8a8a8a" stroke-width="1.4"/><polygon points="0.5,7 5,7 2.8,10.5" fill="#8a8a8a"/></svg>
<svg class="a" style="left:967px;top:3px" width="16" height="15"><polygon points="1,5 4,5 8,1.5 8,13.5 4,10 1,10" fill="#111"/><path d="M10,4.5 Q12,7.5 10,10.5 M12.2,3 Q15,7.5 12.2,12" fill="none" stroke="#111" stroke-width="1.5"/></svg>
<svg class="a" style="left:994px;top:2px" width="22" height="17"><path d="M1,5 Q11,-2.5 21,5 L11,16 Z" fill="#f6f6f6" stroke="#8a8a8a" stroke-width="1"/></svg>
<svg class="a" style="left:1023px;top:4px" width="24" height="13"><rect x="1" y="1" width="19" height="11" rx="1" fill="#f4f4f4" stroke="#222" stroke-width="1.6"/><rect x="20.5" y="4" width="2.5" height="5" fill="#222"/><path d="M4,8 L8,8 L10.5,4.5 L12,8 L16,5" fill="none" stroke="#222" stroke-width="1.3"/></svg>
<svg class="a" style="left:9.0px;top:25px" width="15" height="15"><defs><radialGradient id="g16" cx="50%" cy="65%" r="60%"><stop offset="0" stop-color="#ff8a80"/><stop offset="1" stop-color="#c8281e"/></radialGradient></defs><circle cx="7.5" cy="7.5" r="6.5" fill="url(#g16)" stroke="#7a6a60" stroke-width=".8"/><ellipse cx="7.5" cy="4.3" rx="3.8" ry="2.3" fill="rgba(255,255,255,.55)"/></svg>
<svg class="a" style="left:29.0px;top:25px" width="15" height="15"><defs><radialGradient id="g36" cx="50%" cy="65%" r="60%"><stop offset="0" stop-color="#ffe08a"/><stop offset="1" stop-color="#d88a10"/></radialGradient></defs><circle cx="7.5" cy="7.5" r="6.5" fill="url(#g36)" stroke="#7a6a60" stroke-width=".8"/><ellipse cx="7.5" cy="4.3" rx="3.8" ry="2.3" fill="rgba(255,255,255,.55)"/></svg>
<svg class="a" style="left:49.0px;top:25px" width="15" height="15"><defs><radialGradient id="g56" cx="50%" cy="65%" r="60%"><stop offset="0" stop-color="#b8ee90"/><stop offset="1" stop-color="#4aa028"/></radialGradient></defs><circle cx="7.5" cy="7.5" r="6.5" fill="url(#g56)" stroke="#7a6a60" stroke-width=".8"/><ellipse cx="7.5" cy="4.3" rx="3.8" ry="2.3" fill="rgba(255,255,255,.55)"/></svg>
<div class="t mono" style="left:826px;top:52px;font-size:11px;color:#d0d0d0">Rel. Power:</div>
<div class="t mono" style="left:905px;top:52px;font-size:11px;color:#56c83a">+0.00</div>
<div class="t mono" style="left:957px;top:52px;font-size:11px;color:#72d8dc">+11.33</div>
<div class="t mono" style="left:1016px;top:52px;font-size:11px;color:#2a5ce8">-16.84</div>
<div class="t mono" style="left:1076px;top:52px;font-size:11px;color:#e8a040">-2.87</div>
<div class="t mono" style="left:1128px;top:52px;font-size:11px;color:#e0402c">-3.00 dBR</div>
<div class="a" style="left:947px;top:50px;width:1px;height:13px;background:#9a9a9a"></div>
<div class="a" style="left:1006px;top:50px;width:1px;height:13px;background:#9a9a9a"></div>
<div class="a" style="left:1065px;top:50px;width:1px;height:13px;background:#9a9a9a"></div>
<div class="a" style="left:1118px;top:50px;width:1px;height:13px;background:#9a9a9a"></div>
<div class="t mono" style="left:829px;top:386px;font-size:11px;color:#d0d0d0">Rel. Phase:</div>
<div class="t mono" style="left:908px;top:386px;font-size:11px;color:#56c83a">+0.00&deg;</div>
<div class="t mono" style="left:966px;top:386px;font-size:11px;color:#72d8dc">-7.45&deg;</div>
<div class="t mono" style="left:1026px;top:386px;font-size:11px;color:#2a5ce8">-9.56&deg;</div>
<div class="t mono" style="left:1085px;top:386px;font-size:11px;color:#e8a040">-12.64&deg;</div>
<div class="t mono" style="left:1150px;top:386px;font-size:11px;color:#e0402c">-0.91&deg;</div>
<div class="a" style="left:956px;top:384px;width:1px;height:13px;background:#9a9a9a"></div>
<div class="a" style="left:1015px;top:384px;width:1px;height:13px;background:#9a9a9a"></div>
<div class="a" style="left:1075px;top:384px;width:1px;height:13px;background:#9a9a9a"></div>
<div class="a" style="left:1140px;top:384px;width:1px;height:13px;background:#9a9a9a"></div>
<div class="t" style="left:656px;top:65px;width:43px;height:12px;background:#fff;border:1px solid #222;font-size:10.6px;line-height:11px;padding-left:1px;color:#111;overflow:hidden">1.01 kHz</div>
<div class="t" style="left:656px;top:399px;width:43px;height:12px;background:#fff;border:1px solid #222;font-size:10.6px;line-height:11px;padding-left:1px;color:#111;overflow:hidden">1.01 kHz</div>
<div class="a" style="left:656px;top:411px;width:528px;height:103px;background:#e9e9e9;border:1px solid #555;box-shadow:0 1px 3px rgba(0,0,0,.5)"></div>
<div class="a" style="left:657px;top:412px;width:526px;height:14px;background:linear-gradient(#ececec,#cfcfcf);border-bottom:1px solid #8a8a8a"></div>
<svg class="a" style="left:662px;top:413px" width="12" height="12"><defs><radialGradient id="pb668" cx="50%" cy="40%" r="60%"><stop offset="0" stop-color="#f4f4f4"/><stop offset="1" stop-color="#a8a8a8"/></radialGradient></defs><circle cx="6" cy="6" r="5" fill="url(#pb668)" stroke="#8a8a8a" stroke-width=".8"/></svg>
<svg class="a" style="left:679px;top:413px" width="12" height="12"><defs><radialGradient id="pb685" cx="50%" cy="40%" r="60%"><stop offset="0" stop-color="#f4f4f4"/><stop offset="1" stop-color="#a8a8a8"/></radialGradient></defs><circle cx="6" cy="6" r="5" fill="url(#pb685)" stroke="#8a8a8a" stroke-width=".8"/></svg>
<svg class="a" style="left:696px;top:413px" width="12" height="12"><defs><radialGradient id="pb702" cx="50%" cy="40%" r="60%"><stop offset="0" stop-color="#f4f4f4"/><stop offset="1" stop-color="#a8a8a8"/></radialGradient></defs><circle cx="6" cy="6" r="5" fill="url(#pb702)" stroke="#8a8a8a" stroke-width=".8"/></svg>
<div class="t" style="left:891px;top:414px;font-size:11px;color:#222">Overlay List</div>
<div class="a" style="left:657px;top:426px;width:526px;height:15px;background:linear-gradient(#f2f2f2,#e2e2e2);border-bottom:1px solid #9a9a9a"></div>
<div class="t" style="left:660px;top:428px;font-size:10.2px;font-weight:bold;color:#1a1a1a">Snapshot Name</div>
<div class="t" style="left:802px;top:428px;font-size:10.2px;font-weight:bold;color:#1a1a1a">V</div>
<div class="t" style="left:819px;top:428px;font-size:10.2px;font-weight:bold;color:#1a1a1a">S</div>
<div class="t" style="left:838px;top:428px;font-size:10.2px;font-weight:bold;color:#1a1a1a">I</div>
<div class="t" style="left:997px;top:428px;font-size:10.2px;font-weight:bold;color:#1a1a1a">Fade</div>
<div class="a" style="left:1171px;top:426px;width:1px;height:15px;background:#a8a8a8"></div>
<svg class="a" style="left:1173px;top:429px" width="9" height="10"><polygon points="1,0.5 8.5,5 1,9.5" fill="#111"/></svg>
<div class="a" style="left:661px;top:442px;width:12px;height:12px;background:#7ef0ee;border:1px solid #777;box-shadow:inset 0 0 0 1px rgba(255,255,255,.45)"></div>
<div class="t" style="left:676px;top:442.5px;font-size:11.3px;font-weight:normal;color:#111;-webkit-text-stroke:0.35px #111">L-Mid highest freq boost</div>
<div class="a" style="left:800px;top:442px;width:12px;height:12px;border-radius:2px;background:linear-gradient(#cfe4fb,#7eb4ee);border:1px solid #5a7fb0"></div>
<svg class="a" style="left:801px;top:439px" width="13" height="14"><path d="M2.5,7.5 L5.2,11 L11,1.8" fill="none" stroke="#1c2438" stroke-width="1.7"/></svg>
<div class="a" style="left:817px;top:442px;width:12px;height:12px;border-radius:2px;background:linear-gradient(#cfe4fb,#7eb4ee);border:1px solid #5a7fb0"></div>
<svg class="a" style="left:818px;top:439px" width="13" height="14"><path d="M2.5,7.5 L5.2,11 L11,1.8" fill="none" stroke="#1c2438" stroke-width="1.7"/></svg>
<div class="a" style="left:834px;top:442px;width:12px;height:12px;border-radius:2px;background:linear-gradient(#fdfdfd,#e4e4e4);border:1px solid #8a8a8a"></div>
<div class="a" style="left:851px;top:442px;width:313px;height:13px;border-radius:5px;background:linear-gradient(#fefefe,#ededed 45%,#dedede 55%,#f6f6f6);border:1px solid #8c8c8c"></div>
<div class="a" style="left:1150px;top:442px;width:14px;height:13px;border-radius:0 5px 5px 0;background:linear-gradient(#cfe3fa,#6fa8ec 55%,#9cc6f4);border:1px solid #5a80b8"></div>
<svg class="a" style="left:1153px;top:443px" width="8" height="11"><polygon points="4,1.5 6,4 2,4" fill="#222"/><polygon points="2,6.5 6,6.5 4,9" fill="#222"/></svg>
<div class="t" style="left:855px;top:442.7px;font-size:10.8px;color:#111;-webkit-text-stroke:0.25px #111">None</div>
<div class="a" style="left:661px;top:457px;width:12px;height:12px;background:#1e50e0;border:1px solid #777;box-shadow:inset 0 0 0 1px rgba(255,255,255,.45)"></div>
<div class="t" style="left:676px;top:457.5px;font-size:11.3px;font-weight:normal;color:#111;-webkit-text-stroke:0.35px #111">L-Mid highest freq cut</div>
<div class="a" style="left:800px;top:457px;width:12px;height:12px;border-radius:2px;background:linear-gradient(#cfe4fb,#7eb4ee);border:1px solid #5a7fb0"></div>
<svg class="a" style="left:801px;top:454px" width="13" height="14"><path d="M2.5,7.5 L5.2,11 L11,1.8" fill="none" stroke="#1c2438" stroke-width="1.7"/></svg>
<div class="a" style="left:817px;top:457px;width:12px;height:12px;border-radius:2px;background:linear-gradient(#cfe4fb,#7eb4ee);border:1px solid #5a7fb0"></div>
<svg class="a" style="left:818px;top:454px" width="13" height="14"><path d="M2.5,7.5 L5.2,11 L11,1.8" fill="none" stroke="#1c2438" stroke-width="1.7"/></svg>
<div class="a" style="left:834px;top:457px;width:12px;height:12px;border-radius:2px;background:linear-gradient(#fdfdfd,#e4e4e4);border:1px solid #8a8a8a"></div>
<div class="a" style="left:851px;top:457px;width:313px;height:13px;border-radius:5px;background:linear-gradient(#fefefe,#ededed 45%,#dedede 55%,#f6f6f6);border:1px solid #8c8c8c"></div>
<div class="a" style="left:1150px;top:457px;width:14px;height:13px;border-radius:0 5px 5px 0;background:linear-gradient(#cfe3fa,#6fa8ec 55%,#9cc6f4);border:1px solid #5a80b8"></div>
<svg class="a" style="left:1153px;top:458px" width="8" height="11"><polygon points="4,1.5 6,4 2,4" fill="#222"/><polygon points="2,6.5 6,6.5 4,9" fill="#222"/></svg>
<div class="t" style="left:855px;top:457.7px;font-size:10.8px;color:#111;-webkit-text-stroke:0.25px #111">None</div>
<div class="a" style="left:661px;top:472px;width:12px;height:12px;background:#e8a03a;border:1px solid #777;box-shadow:inset 0 0 0 1px rgba(255,255,255,.45)"></div>
<div class="t" style="left:676px;top:472.5px;font-size:11.3px;font-weight:normal;color:#111;-webkit-text-stroke:0.35px #111">L-Mid lowest freq boost</div>
<div class="a" style="left:800px;top:472px;width:12px;height:12px;border-radius:2px;background:linear-gradient(#cfe4fb,#7eb4ee);border:1px solid #5a7fb0"></div>
<svg class="a" style="left:801px;top:469px" width="13" height="14"><path d="M2.5,7.5 L5.2,11 L11,1.8" fill="none" stroke="#1c2438" stroke-width="1.7"/></svg>
<div class="a" style="left:817px;top:472px;width:12px;height:12px;border-radius:2px;background:linear-gradient(#cfe4fb,#7eb4ee);border:1px solid #5a7fb0"></div>
<svg class="a" style="left:818px;top:469px" width="13" height="14"><path d="M2.5,7.5 L5.2,11 L11,1.8" fill="none" stroke="#1c2438" stroke-width="1.7"/></svg>
<div class="a" style="left:834px;top:472px;width:12px;height:12px;border-radius:2px;background:linear-gradient(#fdfdfd,#e4e4e4);border:1px solid #8a8a8a"></div>
<div class="a" style="left:851px;top:472px;width:313px;height:13px;border-radius:5px;background:linear-gradient(#fefefe,#ededed 45%,#dedede 55%,#f6f6f6);border:1px solid #8c8c8c"></div>
<div class="a" style="left:1150px;top:472px;width:14px;height:13px;border-radius:0 5px 5px 0;background:linear-gradient(#cfe3fa,#6fa8ec 55%,#9cc6f4);border:1px solid #5a80b8"></div>
<svg class="a" style="left:1153px;top:473px" width="8" height="11"><polygon points="4,1.5 6,4 2,4" fill="#222"/><polygon points="2,6.5 6,6.5 4,9" fill="#222"/></svg>
<div class="t" style="left:855px;top:472.7px;font-size:10.8px;color:#111;-webkit-text-stroke:0.25px #111">None</div>
<div class="a" style="left:661px;top:487px;width:12px;height:12px;background:#e0402a;border:1px solid #777;box-shadow:inset 0 0 0 1px rgba(255,255,255,.45)"></div>
<div class="t" style="left:676px;top:487.5px;font-size:11.3px;font-weight:normal;color:#111;-webkit-text-stroke:0.35px #111">L-Mid lowest freq cut</div>
<div class="a" style="left:800px;top:487px;width:12px;height:12px;border-radius:2px;background:linear-gradient(#cfe4fb,#7eb4ee);border:1px solid #5a7fb0"></div>
<svg class="a" style="left:801px;top:484px" width="13" height="14"><path d="M2.5,7.5 L5.2,11 L11,1.8" fill="none" stroke="#1c2438" stroke-width="1.7"/></svg>
<div class="a" style="left:817px;top:487px;width:12px;height:12px;border-radius:2px;background:linear-gradient(#cfe4fb,#7eb4ee);border:1px solid #5a7fb0"></div>
<svg class="a" style="left:818px;top:484px" width="13" height="14"><path d="M2.5,7.5 L5.2,11 L11,1.8" fill="none" stroke="#1c2438" stroke-width="1.7"/></svg>
<div class="a" style="left:834px;top:487px;width:12px;height:12px;border-radius:2px;background:linear-gradient(#fdfdfd,#e4e4e4);border:1px solid #8a8a8a"></div>
<div class="a" style="left:851px;top:487px;width:313px;height:13px;border-radius:5px;background:linear-gradient(#fefefe,#ededed 45%,#dedede 55%,#f6f6f6);border:1px solid #8c8c8c"></div>
<div class="a" style="left:1150px;top:487px;width:14px;height:13px;border-radius:0 5px 5px 0;background:linear-gradient(#cfe3fa,#6fa8ec 55%,#9cc6f4);border:1px solid #5a80b8"></div>
<svg class="a" style="left:1153px;top:488px" width="8" height="11"><polygon points="4,1.5 6,4 2,4" fill="#222"/><polygon points="2,6.5 6,6.5 4,9" fill="#222"/></svg>
<div class="t" style="left:855px;top:487.7px;font-size:10.8px;color:#111;-webkit-text-stroke:0.25px #111">None</div>
<div class="a" style="left:661px;top:502px;width:12px;height:12px;background:#e0402a;border:1px solid #777;box-shadow:inset 0 0 0 1px rgba(255,255,255,.45)"></div>
<div class="t" style="left:676px;top:502.5px;font-size:11.3px;font-weight:normal;color:#111;-webkit-text-stroke:0.35px #111">EQ HF boost</div>
<div class="a" style="left:800px;top:502px;width:12px;height:12px;border-radius:2px;background:linear-gradient(#fdfdfd,#e4e4e4);border:1px solid #8a8a8a"></div>
<div class="a" style="left:817px;top:502px;width:12px;height:12px;border-radius:2px;background:linear-gradient(#fdfdfd,#e4e4e4);border:1px solid #8a8a8a"></div>
<div class="a" style="left:834px;top:502px;width:12px;height:12px;border-radius:2px;background:linear-gradient(#fdfdfd,#e4e4e4);border:1px solid #8a8a8a"></div>
<div class="a" style="left:851px;top:502px;width:313px;height:13px;border-radius:5px;background:linear-gradient(#fefefe,#ededed 45%,#dedede 55%,#f6f6f6);border:1px solid #8c8c8c"></div>
<div class="a" style="left:1150px;top:502px;width:14px;height:13px;border-radius:0 5px 5px 0;background:linear-gradient(#cfe3fa,#6fa8ec 55%,#9cc6f4);border:1px solid #5a80b8"></div>
<svg class="a" style="left:1153px;top:503px" width="8" height="11"><polygon points="4,1.5 6,4 2,4" fill="#222"/><polygon points="2,6.5 6,6.5 4,9" fill="#222"/></svg>
<div class="t" style="left:855px;top:502.7px;font-size:10.8px;color:#111;-webkit-text-stroke:0.25px #111">None</div>
<div class="a" style="left:1170px;top:441px;width:13px;height:58px;background:linear-gradient(90deg,#dcdcdc,#f6f6f6 50%,#dcdcdc);border-left:1px solid #b0b0b0"></div>
<div class="a" style="left:1171px;top:446px;width:11px;height:24px;border-radius:6px;background:linear-gradient(90deg,#3c6ed8,#a4cdf8 50%,#3c6ed8);border:1px solid #3a5a9a"></div>
<svg class="a" style="left:1172px;top:473px" width="10" height="26"><polygon points="5,2 9,8 1,8" fill="#777"/><line x1="0" y1="13" x2="10" y2="13" stroke="#c4c4c4"/><polygon points="1,17 9,17 5,23" fill="#777"/></svg>
<svg class="a" style="left:1171px;top:500px" width="12" height="13"><path d="M11,4 L4,11 M11,8 L8,11" stroke="#999" stroke-width="1"/></svg>
<div class="a" style="left:3px;top:727px;width:14px;height:14px;background:#6cf24c;border:1px solid #333"></div>
<svg class="a" style="left:4px;top:728px" width="12" height="12"><circle cx="6" cy="6" r="4.4" fill="none" stroke="#123008" stroke-width="1.1"/><line x1="6" y1="2.8" x2="6" y2="9.2" stroke="#123008" stroke-width="1.3"/></svg>
<div class="a" style="left:19px;top:727px;width:30px;height:14px;background:linear-gradient(#f4f4f4,#dcdcdc);border:2px solid #4a4a4a;border-right-color:#6a6a6a"></div>
<div class="t" style="left:23px;top:728px;font-size:11.5px;color:#111">Solo</div>
<div class="a" style="left:50px;top:726px;width:14px;height:15px;border-radius:3px;background:linear-gradient(#f0f0f0,#cccccc);border:1px solid #7a7a7a"></div>
<svg class="a" style="left:51px;top:728px" width="12" height="11"><circle cx="3.5" cy="3" r="1.6" fill="none" stroke="#333" stroke-width=".9"/><circle cx="3.5" cy="8" r="1.6" fill="none" stroke="#333" stroke-width=".9"/><g fill="#333"><rect x="7" y="2.5" width="1" height="1"/><rect x="9" y="2.5" width="1" height="1"/><rect x="7" y="7.5" width="1" height="1"/><rect x="9" y="7.5" width="1" height="1"/></g></svg>
<div class="a" style="left:67px;top:725px;width:91px;height:17px;border-radius:9px;background:linear-gradient(#ffffff,#f2f2f2 50%,#e6e6e6 51%,#f8f8f8);border:1px solid #8a8a8a;font-size:10.2px;font-weight:bold;color:#1a1a1a;text-align:center;line-height:15px;white-space:nowrap">Take Snapshot...</div>
<div class="a" style="left:160px;top:725px;width:77px;height:17px;border-radius:9px;background:linear-gradient(#ffffff,#f2f2f2 50%,#e6e6e6 51%,#f8f8f8);border:1px solid #8a8a8a;font-size:10.2px;font-weight:bold;color:#1a1a1a;text-align:center;line-height:15px;white-space:nowrap">Overlay List...</div>
<div class="a" style="left:240px;top:725px;width:63px;height:17px;border-radius:9px;background:linear-gradient(#ffffff,#f2f2f2 50%,#e6e6e6 51%,#f8f8f8);border:1px solid #8a8a8a;font-size:10.2px;font-weight:bold;color:#1a1a1a;text-align:center;line-height:15px;white-space:nowrap">Clear Data</div>
<div class="t" style="left:1122px;top:80px;font-size:12.4px;font-weight:normal;font-style:italic;color:#d4d4d4;-webkit-text-stroke:0.3px #d4d4d4">SpectraFoo</div>
<div class="a" style="left:1197px;top:30px;width:3px;height:715px;background:#b4b4b4"></div>
<div class="a" style="left:1184px;top:730px;width:13px;height:13px;background:#fafafa"></div><svg class="a" style="left:1184px;top:730px" width="13" height="13"><path d="M12,2 L2,12 M12,6 L6,12 M12,10 L10,12" stroke="#7a7a7a" stroke-width="1"/></svg>
</body></html>
